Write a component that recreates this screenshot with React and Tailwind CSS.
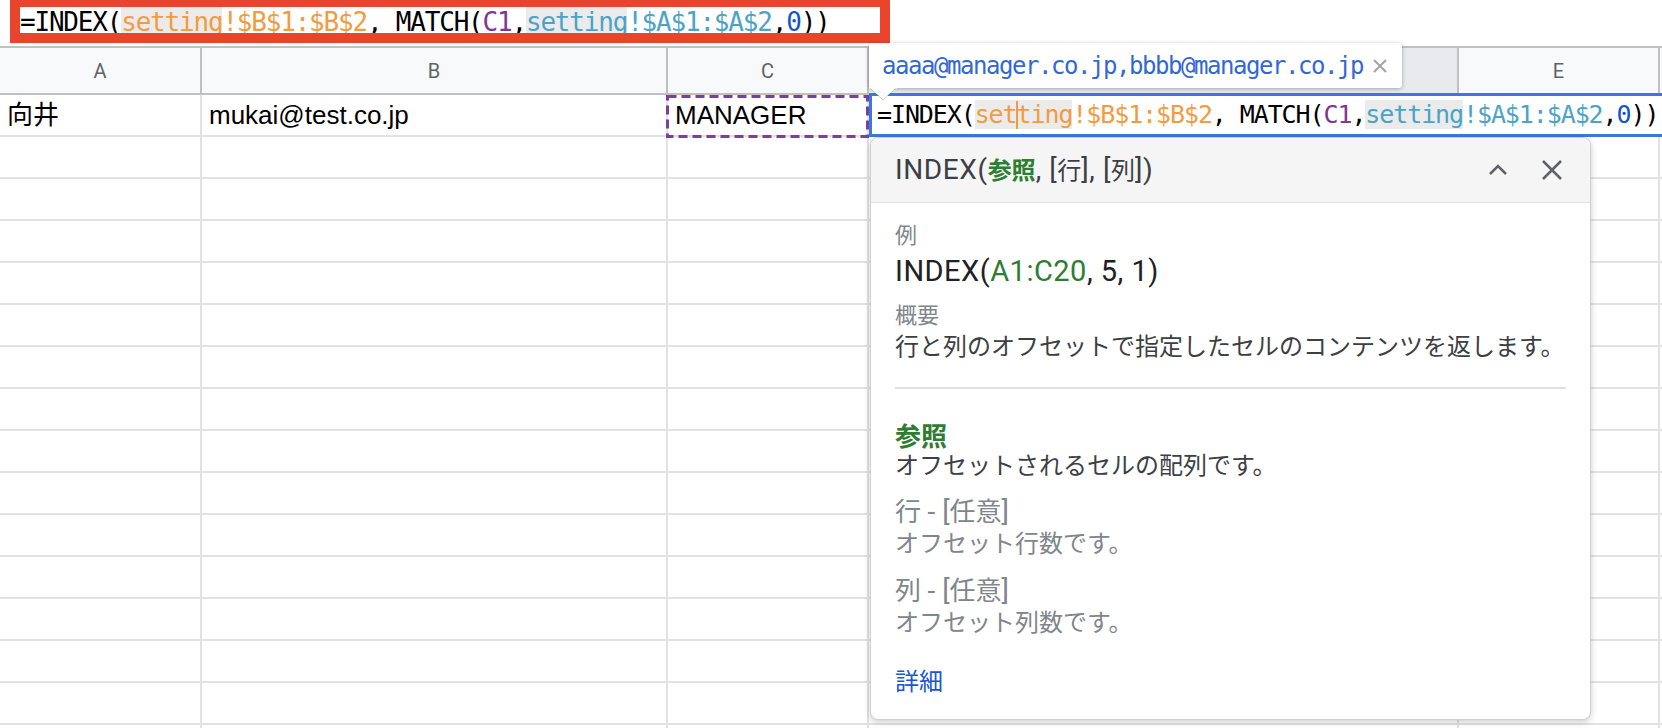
import React from "react";

const cols = [
  { w: "w-[202px]", label: "A" },
  { w: "w-[466px]", label: "B" },
  { w: "w-[201px]", label: "C" },
  { w: "w-[590px]", label: "D", active: true },
  { w: "w-[201px]", label: "E" },
  { w: "w-[200px]", label: "F" },
];

function Formula({ cursor }) {
  return (
    <>
      <span className="text-black">=INDEX(</span>
      {cursor ? (
        <span className="bg-[#ebebeb] text-[#f19c41]">
          set
          <span className="inline-block w-[2px] h-[28px] -mx-[1px] align-[-6px] bg-[#f19c41]"></span>
          ting
        </span>
      ) : (
        <span className="bg-[#ebebeb] text-[#f19c41]">setting</span>
      )}
      <span className="text-[#f19c41]">!$B$1:$B$2</span>
      <span className="text-black">, MATCH(</span>
      <span className="text-[#7e3794]">C1</span>
      <span className="text-black">,</span>
      <span className="bg-[#ebebeb] text-[#4ba3c7]">setting</span>
      <span className="text-[#4ba3c7]">!$A$1:$A$2</span>
      <span className="text-black">,</span>
      <span className="text-[#1155cc]">0</span>
      <span className="text-black">))</span>
    </>
  );
}

export default function App() {
  const rows = Array.from({ length: 16 }, (_, i) => i);
  return (
    <div className="relative w-[1662px] h-[728px] overflow-hidden bg-white font-['Liberation_Sans','Noto_Sans_CJK_JP',sans-serif]">
      {/* formula bar crop with red highlight */}
      <div className="h-[46px]">
        <div className="ml-[10px] w-[880px] h-[43px] bg-[#e9452c] pt-[7px] pl-[10px] pr-[10px] pb-[10px]">
          <div className="h-full bg-white overflow-hidden pt-[2px] whitespace-pre font-['DejaVu_Sans_Mono',monospace] text-[26px] leading-[26px] tracking-[-1.2px]">
            <Formula />
          </div>
        </div>
      </div>

      {/* column header */}
      <div className="flex h-[49px] border-t-2 border-b-2 border-[#c0c0c0] bg-[#f8f9fa]">
        {cols.map((c) => (
          <div
            key={c.label}
            className={`${c.w} shrink-0 h-full border-r-2 border-[#c0c0c0] flex items-center justify-center font-['Roboto',sans-serif] text-[20px] text-[#5f6368] ${c.active ? "bg-[#e8eaed]" : ""}`}
          >
            {c.label}
          </div>
        ))}
      </div>

      {/* grid rows */}
      {rows.map((r) => (
        <div key={r} className="flex h-[42px] border-b-2 border-[#e2e2e2]">
          {cols.map((c, ci) => (
            <div
              key={c.label}
              className={`${c.w} shrink-0 h-full border-r-2 border-[#e2e2e2] flex items-center pl-[7px] pt-[1px] text-[26px] text-black whitespace-nowrap overflow-hidden`}
            >
              {r === 0 && ci === 0 && "向井"}
              {r === 0 && ci === 1 && "mukai@test.co.jp"}
              {r === 0 && ci === 2 && "MANAGER"}
            </div>
          ))}
        </div>
      ))}

      {/* dashed reference highlight on C1 */}
      <svg className="absolute left-[666px] top-[95px]" width="203" height="43" viewBox="0 0 203 43">
        <rect x="1.5" y="1.5" width="200" height="40" fill="none" stroke="#7b3f9e" strokeWidth="3" strokeDasharray="9 5" />
      </svg>

      {/* in-cell editor */}
      <div className="absolute left-[869px] top-[93px] w-[800px] h-[44px] border-[3px] border-[#3b78de] bg-white pl-[5px] whitespace-pre font-['DejaVu_Sans_Mono',monospace] text-[25px] leading-[38px] tracking-[-1.1px]">
        <Formula cursor />
      </div>

      {/* value tooltip */}
      <div className="absolute left-[869px] top-[43px] w-[533px] h-[45px] bg-white rounded-[3px] shadow-[0_1px_4px_rgba(0,0,0,0.3)] flex items-center pl-[13px]">
        <span className="whitespace-pre font-['DejaVu_Sans_Mono',monospace] text-[24px] tracking-[-1.45px] text-[#3367d6]">
          aaaa@manager.co.jp,bbbb@manager.co.jp
        </span>
        <svg className="ml-[9px]" width="16" height="16" viewBox="0 0 16 16">
          <path d="M2 2L14 14M14 2L2 14" stroke="#a0a4a8" strokeWidth="2" fill="none" />
        </svg>
        <svg className="absolute left-[0px] top-[44px]" width="28" height="14" viewBox="0 0 28 14">
          <polygon points="0,0 28,0 14,13" fill="#ffffff" />
          <polyline points="1,1 14,13 27,1" fill="none" stroke="rgba(0,0,0,0.18)" strokeWidth="1" />
          <rect x="0" y="0" width="28" height="1.5" fill="#ffffff" />
        </svg>
      </div>

      {/* function help popup */}
      <div className="absolute left-[870px] top-[137px] w-[721px] h-[583px] bg-white rounded-[8px] border border-[#d0d0d0] shadow-[0_2px_6px_rgba(0,0,0,0.2)] overflow-hidden font-['Roboto','Noto_Sans_CJK_JP',sans-serif]">
        <div className="h-[65px] bg-[#f5f5f5] border-b border-[#e0e0e0] flex items-center pl-[24px] pr-[27px]">
          <div className="flex-1 text-[28px] leading-[34px] tracking-[0.6px] text-[#3c4043]">
            INDEX(<span className="text-[24px] tracking-normal text-[#2e7d32] font-bold">参照</span>, [<span className="text-[24px] tracking-normal">行</span>], [<span className="text-[24px] tracking-normal">列</span>])
          </div>
          <svg width="20" height="12" viewBox="0 0 20 12" className="mr-[33px]">
            <path d="M2 10L10 2L18 10" stroke="#5f6368" strokeWidth="2.5" fill="none" />
          </svg>
          <svg width="22" height="22" viewBox="0 0 22 22">
            <path d="M2 2L20 20M20 2L2 20" stroke="#5f6368" strokeWidth="2.5" fill="none" />
          </svg>
        </div>
        <div className="px-[24px]">
          <div className="mt-[19px] text-[22px] leading-[28px] text-[#80868b]">例</div>
          <div className="mt-[5px] text-[29px] leading-[32px] tracking-[0.5px] text-[#202124]">
            INDEX(<span className="text-[#2e7d32]">A1:C20</span>, 5, 1)
          </div>
          <div className="mt-[15px] text-[22px] leading-[28px] text-[#80868b]">概要</div>
          <div className="mt-[1px] text-[24px] leading-[32px] text-[#3c4043]">
            行と列のオフセットで指定したセルのコンテンツを返します。
          </div>
          <div className="mt-[24px] h-[2px] bg-[#e0e0e0]"></div>
          <div className="mt-[34px] text-[26px] leading-[28px] font-bold text-[#2e7d32]">参照</div>
          <div className="mt-[1px] text-[24px] leading-[28px] text-[#3c4043]">オフセットされるセルの配列です。</div>
          <div className="mt-[15px] text-[26px] leading-[34px] text-[#80868b]">
            行 <span className="text-[28px]">- [</span>任意<span className="text-[28px]">]</span>
          </div>
          <div className="-mt-[2px] text-[24px] leading-[34px] text-[#80868b]">オフセット行数です。</div>
          <div className="mt-[13px] text-[26px] leading-[34px] text-[#80868b]">
            列 <span className="text-[28px]">- [</span>任意<span className="text-[28px]">]</span>
          </div>
          <div className="-mt-[2px] text-[24px] leading-[34px] text-[#80868b]">オフセット列数です。</div>
          <div className="mt-[26px] text-[24px] leading-[32px] text-[#1a56d6]">詳細</div>
        </div>
      </div>
    </div>
  );
}
